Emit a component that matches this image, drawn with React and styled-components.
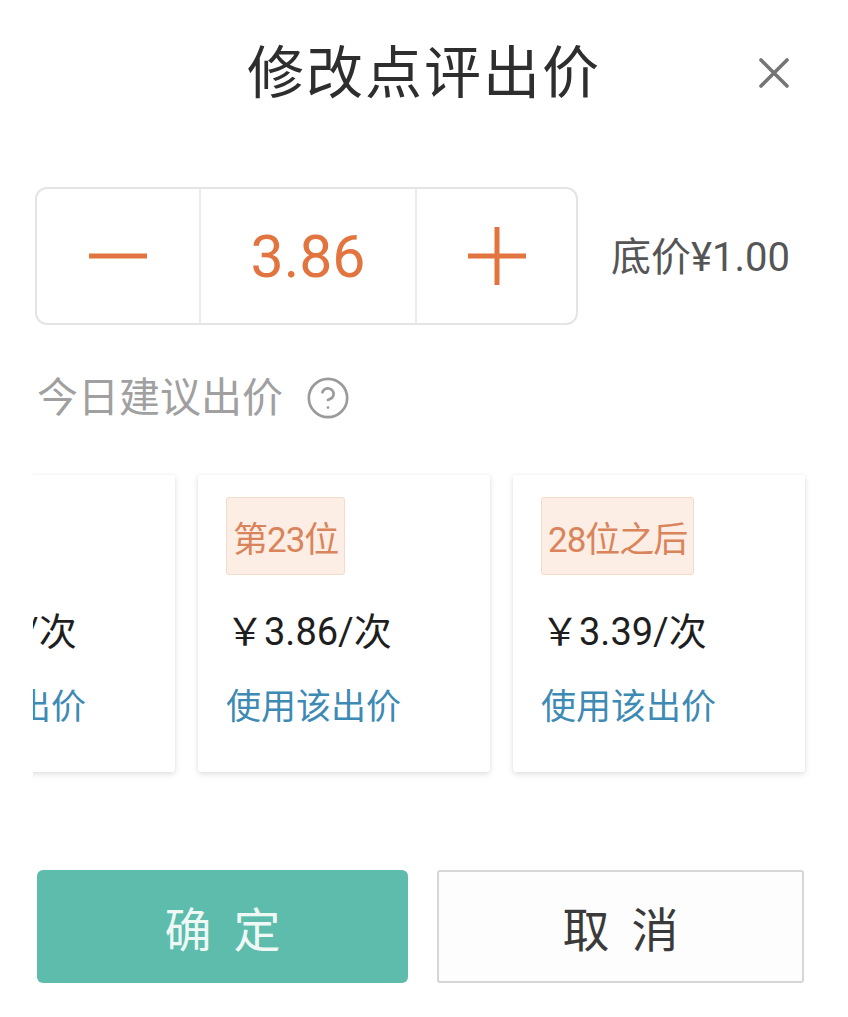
import React, { useLayoutEffect, useRef } from "react";
import styled, { createGlobalStyle } from "styled-components";
import { CircleHelp } from "lucide-react";

const Global = createGlobalStyle`
  html, body { margin: 0; padding: 0; background: #ffffff; }
  body {
    font-family: Roboto, "Noto Sans CJK SC", "Noto Sans", sans-serif;
    -webkit-font-smoothing: antialiased;
  }
  * { box-sizing: border-box; }
`;

const Page = styled.div`
  width: 848px;
  height: 1017px;
  background: #fff;
  padding: 0 35px;
  overflow: hidden;
`;

const Header = styled.div`
  display: grid;
  grid-template-columns: 1fr auto 1fr;
  align-items: center;
  height: 146px;
  margin: 0 -35px;
`;

const Title = styled.h1`
  grid-column: 2;
  margin: 0;
  font-size: 57px;
  font-weight: 400;
  letter-spacing: 2px;
  color: #2e2e2e;
  line-height: 1;
`;

const CloseButton = styled.button`
  grid-column: 3;
  justify-self: end;
  margin-right: 58px;
  width: 32px;
  height: 32px;
  padding: 0;
  border: none;
  background: none;
  display: flex;
  align-items: center;
  justify-content: center;
`;

const StepperRow = styled.div`
  display: flex;
  align-items: center;
  margin-top: 41px;
`;

const Stepper = styled.div`
  display: flex;
  width: 543px;
  height: 138px;
  border: 2px solid #e4e4e4;
  border-radius: 12px;
  overflow: hidden;
`;

const StepCell = styled.div`
  width: ${(p) => p.$w}px;
  flex: none;
  display: flex;
  align-items: center;
  justify-content: center;
  border-left: ${(p) => (p.$divider ? "2px solid #ececec" : "none")};
`;

const Amount = styled.span`
  font-family: Roboto, "Noto Sans", sans-serif;
  font-size: 59px;
  color: #e2743f;
  line-height: 1;
`;

const FloorPrice = styled.span`
  margin-left: 33px;
  margin-top: -5px;
  font-size: 40px;
  color: #555;
  white-space: nowrap;
`;

const Suggest = styled.div`
  display: flex;
  align-items: center;
  margin-top: 49px;
  padding-left: 2px;
  font-size: 41px;
  line-height: 48px;
  color: #a0a0a0;
  gap: 22px;
`;

const Scroller = styled.div`
  margin: 43px -27px 0 -2px;
  padding: 10px 0;
  display: flex;
  gap: 23px;
  overflow-x: auto;
  overflow-y: hidden;
  scrollbar-width: none;
  &::-webkit-scrollbar { display: none; }
`;

const Spacer = styled.div`
  flex: none;
  width: 60px;
`;

const Card = styled.div`
  flex: none;
  width: 292px;
  height: 297px;
  background: #fff;
  border-radius: 3px;
  box-shadow: 0 2px 6px rgba(0, 0, 0, 0.13), 0 0 2px rgba(0, 0, 0, 0.05);
  padding: 22px 0 0 28px;
  display: flex;
  flex-direction: column;
  align-items: flex-start;
`;

const Rank = styled.span`
  display: inline-flex;
  align-items: center;
  height: 78px;
  padding: 0 6px;
  background: #fdeee5;
  border: 1px solid #f4dccd;
  border-radius: 3px;
  color: #d9845a;
  font-size: 35px;
  letter-spacing: -1px;
  white-space: nowrap;
`;

const Price = styled.span`
  margin-top: 33px;
  font-size: 38px;
  line-height: 48px;
  color: #1e1e1e;
  white-space: nowrap;
`;

const UseLink = styled.span`
  margin-top: 28px;
  font-size: 35px;
  line-height: 48px;
  color: #3d8ab4;
  white-space: nowrap;
`;

const Actions = styled.div`
  display: flex;
  gap: 29px;
  margin-top: 88px;
  padding: 0 9px 0 2px;
`;

const ActionButton = styled.button`
  flex: none;
  width: ${(p) => p.$w}px;
  height: 113px;
  border-radius: ${(p) => (p.$primary ? "6px" : "3px")};
  border: ${(p) => (p.$primary ? "none" : "2px solid #d6d6d6")};
  background: ${(p) => (p.$primary ? "#5dbcab" : "#fdfdfd")};
  color: ${(p) => (p.$primary ? "#eef9f6" : "#3a3a3a")};
  font-family: "Noto Sans CJK SC", sans-serif;
  font-size: 47px;
  letter-spacing: 22px;
  text-indent: 22px;
  padding: 0;
  display: flex;
  align-items: center;
  justify-content: center;
`;

const suggestions = [
  { rank: "第1位", price: "￥4.52/次" },
  { rank: "第23位", price: "￥3.86/次" },
  { rank: "28位之后", price: "￥3.39/次" },
];

export default function App() {
  const scrollRef = useRef(null);
  useLayoutEffect(() => {
    if (scrollRef.current) scrollRef.current.scrollLeft = 150;
  }, []);

  return (
    <>
      <Global />
      <Page>
        <Header>
          <Title>修改点评出价</Title>
          <CloseButton aria-label="关闭">
            <svg width="32" height="32" viewBox="0 0 32 32">
              <path d="M3 3 L29 29 M29 3 L3 29" stroke="#757575" strokeWidth="3.6" strokeLinecap="round" />
            </svg>
          </CloseButton>
        </Header>

        <StepperRow>
          <Stepper>
            <StepCell $w={162}>
              <svg width="60" height="8" viewBox="0 0 60 8">
                <rect x="1" y="1.5" width="58" height="5" fill="#e2743f" />
              </svg>
            </StepCell>
            <StepCell $w={216} $divider>
              <Amount>3.86</Amount>
            </StepCell>
            <StepCell $w={161} $divider>
              <svg width="60" height="60" viewBox="0 0 60 60">
                <rect x="1" y="27.5" width="58" height="5" fill="#e2743f" />
                <rect x="27.5" y="1" width="5" height="58" fill="#e2743f" />
              </svg>
            </StepCell>
          </Stepper>
          <FloorPrice>底价¥1.00</FloorPrice>
        </StepperRow>

        <Suggest>
          今日建议出价
          <CircleHelp size={46} strokeWidth={1.4} color="#9a9a9a" />
        </Suggest>

        <Scroller ref={scrollRef}>
          {suggestions.map((s) => (
            <Card key={s.rank}>
              <Rank>{s.rank}</Rank>
              <Price>{s.price}</Price>
              <UseLink>使用该出价</UseLink>
            </Card>
          ))}
          <Spacer />
        </Scroller>

        <Actions>
          <ActionButton $primary $w={371}>确定</ActionButton>
          <ActionButton $w={367}>取消</ActionButton>
        </Actions>
      </Page>
    </>
  );
}
